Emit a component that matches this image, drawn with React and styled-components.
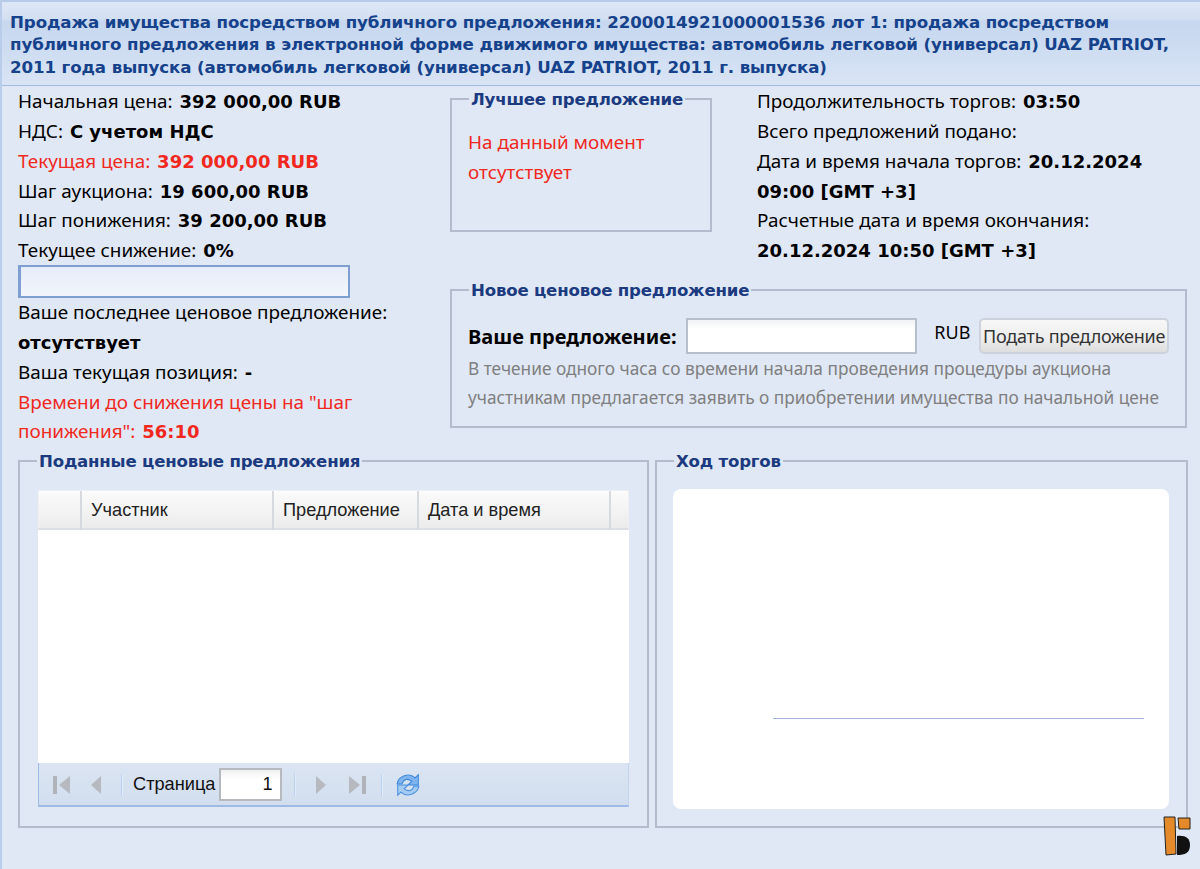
import React from 'react';
import styled, { createGlobalStyle } from 'styled-components';

const GlobalStyle = createGlobalStyle`
  html, body { margin: 0; padding: 0; background: #e0e8f5; }
  body { font-family: 'Noto Sans', 'Liberation Sans', sans-serif; font-size: 18.9px; color: #000; }
  * { box-sizing: border-box; }
  b { font-family: 'DejaVu Sans', sans-serif; font-size: 18px; }
`;

const Page = styled.div`
  position: relative;
  width: 1200px;
  height: 869px;
  overflow: hidden;
  background: #e0e8f5;
  border-left: 2px solid #b9cdea;
`;

const Header = styled.div`
  height: 86px;
  margin-left: -2px;
  padding: 10px 10px 0;
  border-top: 2px solid #b5cbe9;
  border-bottom: 1px solid #9fbbe2;
  background: linear-gradient(#dde7f6 0%, #d3e0f2 20%, #c6d7ef 24%, #d9e4f5 100%);
  color: #15428b;
  font: bold 16.65px/22.3px 'DejaVu Sans', sans-serif;
  letter-spacing: -0.1px;
  white-space: nowrap;
`;

const Top = styled.div`
  display: grid;
  grid-template-columns: 432px 1fr;
  padding-left: 16px;
  height: 364px;
`;

const Info = styled.div`
  padding-top: 1px;
  line-height: 29.85px;
  white-space: nowrap;
`;

const Line = styled.div`
  color: ${p => (p.$red ? '#f0281e' : '#000')};
`;

const Val = styled.b`
  margin-left: 2px;
`;

const Progress = styled.div`
  width: 332px;
  height: 33px;
  margin-top: -1px;
  border: 2px solid #7f9fd3;
  border-left-width: 3px;
  background: linear-gradient(#e6edf8, #f2f5fb);
`;

const Right = styled.div`
  padding-top: 2px;
`;

const TopRow = styled.div`
  display: grid;
  grid-template-columns: 307px 1fr;
  height: 191px;
`;

const Box = styled.fieldset`
  margin: 0;
  min-width: 0;
  padding: ${p => p.$pad || '0'};
  border: 2px solid #b3bbcd;
  height: ${p => p.$h};
  width: ${p => p.$w};
`;

const Legend = styled.legend`
  margin-left: ${p => p.$ml || '17px'};
  padding: 2px 2px 0;
  color: #1b3a80;
  font: bold 16.6px/20px 'DejaVu Sans', sans-serif;
  letter-spacing: -0.2px;
`;

const BestText = styled.div`
  color: #f0281e;
  line-height: 30px;
  padding: 17px 0 0 16px;
`;

const Meta = styled.div`
  margin-top: -1px;
  line-height: 29.85px;
  white-space: nowrap;
`;

const OfferRow = styled.div`
  display: flex;
  align-items: center;
  height: 36px;
  margin-top: 17px;
`;

const OfferLabel = styled.span`
  font-size: 20px;
  font-weight: bold;
  width: 218px;
`;

const OfferInput = styled.input`
  width: 232px;
  height: 36px;
  border: 2px solid #b8bfcc;
  background: linear-gradient(#f1f3f6, #fff 30%);
  outline: none;
`;

const Currency = styled.span`
  margin: -8px 0 0 17px;
  width: 45px;
  font-size: 18px;
`;

const Submit = styled.button`
  width: 190px;
  height: 36px;
  padding: 0;
  border: 2px solid #cdd3dc;
  border-radius: 5px;
  background: linear-gradient(#f7f7f7 0%, #eeeeee 55%, #dedede 100%);
  color: #333;
  font: 18px 'Noto Sans', sans-serif;
  letter-spacing: -0.25px;
`;

const Hint = styled.div`
  color: #7f7f7f;
  font-size: 17.27px;
  line-height: 28.5px;
  margin-top: 1px;
  white-space: nowrap;
`;

const Bottom = styled.div`
  display: grid;
  grid-template-columns: 631px 533px;
  gap: 6px;
  padding-left: 16px;
  height: 388px;
`;

const Grid = styled.div`
  width: 591px;
  height: 317px;
  margin: 18px 0 0 18px;
  display: flex;
  flex-direction: column;
  background: #fff;
`;

const GridHead = styled.div`
  display: grid;
  grid-template-columns: 43px 192px 145px 192px 1fr;
  height: 40px;
  border: 1px solid #eef0f3;
  border-bottom: 2px solid #dcdfe4;
  background: linear-gradient(#fbfbfb, #ececec);
`;

const HeadCell = styled.div`
  padding-left: 9px;
  border-right: 2px solid #d6d9de;
  font: 18.2px/39px 'Liberation Sans', sans-serif;
  color: #222;
  &:last-child { border-right: none; }
`;

const GridBody = styled.div`
  flex: 1;
`;

const Pager = styled.div`
  height: 44px;
  display: flex;
  align-items: center;
  padding: 1px 0 0 14px;
  border-left: 1px solid #9dbbe6;
  border-bottom: 2px solid #9dbbe6;
  border-right: 1px solid #c3d3ea;
  background: linear-gradient(#dbe5f3, #d2deee);
`;

const PagerIcon = styled.svg`
  width: ${p => p.$w || 18}px;
  height: ${p => p.$h || 20}px;
  margin-right: ${p => p.$mr || 0}px;
`;

const Sep = styled.span`
  width: 2px;
  height: 22px;
  margin: ${p => p.$m};
  background: linear-gradient(90deg, #a9c6ee, #f3f7fd);
`;

const PageLabel = styled.span`
  font: 18.2px 'Liberation Sans', sans-serif;
  color: #111;
  margin-right: 4px;
`;

const PageInput = styled.input`
  width: 63px;
  height: 33px;
  padding: 0 8px;
  border: 2px solid #b6babf;
  background: linear-gradient(#f0f0f0, #fff 30%);
  text-align: right;
  font: 18px 'Liberation Sans', sans-serif;
  color: #111;
`;

const Chart = styled.div`
  position: relative;
  width: 496px;
  height: 320px;
  margin: 17px 0 0 16px;
  border-radius: 8px;
  background: #fff;
`;

const Axis = styled.div`
  position: absolute;
  left: 100px;
  top: 229px;
  width: 371px;
  height: 1px;
  background: #a4b8dd;
`;

const Logo = styled.svg`
  position: absolute;
  left: 1159px;
  top: 815px;
  width: 30px;
  height: 42px;
`;

export default function App() {
  return (
    <Page>
      <GlobalStyle />
      <Header>
        Продажа имущества посредством публичного предложения: 2200014921000001536 лот 1: продажа посредством<br />
        публичного предложения в электронной форме движимого имущества: автомобиль легковой (универсал) UAZ PATRIOT,<br />
        2011 года выпуска (автомобиль легковой (универсал) UAZ PATRIOT, 2011 г. выпуска)
      </Header>
      <Top>
        <Info>
          <Line>Начальная цена: <Val>392 000,00 RUB</Val></Line>
          <Line>НДС: <Val>С учетом НДС</Val></Line>
          <Line $red>Текущая цена: <Val>392 000,00 RUB</Val></Line>
          <Line>Шаг аукциона: <Val>19 600,00 RUB</Val></Line>
          <Line>Шаг понижения: <Val>39 200,00 RUB</Val></Line>
          <Line>Текущее снижение: <Val>0%</Val></Line>
          <Progress />
          <Line>Ваше последнее ценовое предложение:</Line>
          <Line><b>отсутствует</b></Line>
          <Line>Ваша текущая позиция: <Val>-</Val></Line>
          <Line $red>Времени до снижения цены на "шаг</Line>
          <Line $red>понижения": <Val>56:10</Val></Line>
        </Info>
        <Right>
          <TopRow>
            <Box $w="262px" $h="144px">
              <Legend>Лучшее предложение</Legend>
              <BestText>На данный момент<br />отсутствует</BestText>
            </Box>
            <Meta>
              Продолжительность торгов: <Val>03:50</Val><br />
              Всего предложений подано:<br />
              Дата и время начала торгов: <Val>20.12.2024</Val><br />
              <b>09:00 [GMT +3]</b><br />
              Расчетные дата и время окончания:<br />
              <b>20.12.2024 10:50 [GMT +3]</b>
            </Meta>
          </TopRow>
          <Box $w="737px" $h="149px" $pad="0 16px">
            <Legend $ml="1px">Новое ценовое предложение</Legend>
            <OfferRow>
              <OfferLabel>Ваше предложение:</OfferLabel>
              <OfferInput />
              <Currency>RUB</Currency>
              <Submit>Подать предложение</Submit>
            </OfferRow>
            <Hint>
              В течение одного часа со времени начала проведения процедуры аукциона<br />
              участникам предлагается заявить о приобретении имущества по начальной цене
            </Hint>
          </Box>
        </Right>
      </Top>
      <Bottom>
        <Box $h="378px">
          <Legend>Поданные ценовые предложения</Legend>
          <Grid>
            <GridHead>
              <HeadCell />
              <HeadCell>Участник</HeadCell>
              <HeadCell>Предложение</HeadCell>
              <HeadCell>Дата и время</HeadCell>
              <HeadCell />
            </GridHead>
            <GridBody />
            <Pager>
              <PagerIcon viewBox="0 0 18 20" $mr={18}>
                <rect x="0" y="1" width="4" height="18" fill="#b0b4ba" />
                <path d="M17 1 V19 L6 10 Z" fill="#b6bac0" />
              </PagerIcon>
              <PagerIcon viewBox="0 0 14 20" $w={14}>
                <path d="M12 1 V19 L2 10 Z" fill="#b6bac0" />
              </PagerIcon>
              <Sep $m="0 10px 0 18px" />
              <PageLabel>Страница</PageLabel>
              <PageInput readOnly value="1" />
              <Sep $m="0 18px 0 12px" />
              <PagerIcon viewBox="0 0 14 20" $w={14} $mr={20}>
                <path d="M2 1 V19 L12 10 Z" fill="#b6bac0" />
              </PagerIcon>
              <PagerIcon viewBox="0 0 18 20">
                <path d="M1 1 V19 L12 10 Z" fill="#b6bac0" />
                <rect x="14" y="1" width="4" height="18" fill="#b0b4ba" />
              </PagerIcon>
              <Sep $m="0 12px 0 15px" />
              <PagerIcon viewBox="0 0 24 24" $w={26} $h={26}>
                <path d="M2 11 C3 4 13 0 18.500 5.500 L21.500 2.500 V12 H12 L15.500 8.500 C12 5.500 8 6.500 6.500 11 Z" fill="#7fb4ee" stroke="#3f88dc" strokeWidth="1" />
                <path d="M22 13 C21 20 11 24 5.500 18.500 L2.500 21.500 V12 H12 L8.500 15.500 C12 18.500 16 17.500 17.500 13 Z" fill="#a5cbf4" stroke="#4c92e0" strokeWidth="1" />
              </PagerIcon>
            </Pager>
          </Grid>
        </Box>
        <Box $h="378px">
          <Legend>Ход торгов</Legend>
          <Chart>
            <Axis />
          </Chart>
        </Box>
      </Bottom>
      <Logo viewBox="0 0 30 42">
        <path d="M16 21 C24 20 29 23 29 30 C29 38 24 40 16 40 Z" fill="#111" />
        <path d="M3 2 H14 L15 39 L5 40 Z" fill="#e58a2a" stroke="#222" strokeWidth="1" />
        <path d="M17 3 H29 V14 H18 Z" fill="#e58a2a" stroke="#222" strokeWidth="1" />
      </Logo>
    </Page>
  );
}
